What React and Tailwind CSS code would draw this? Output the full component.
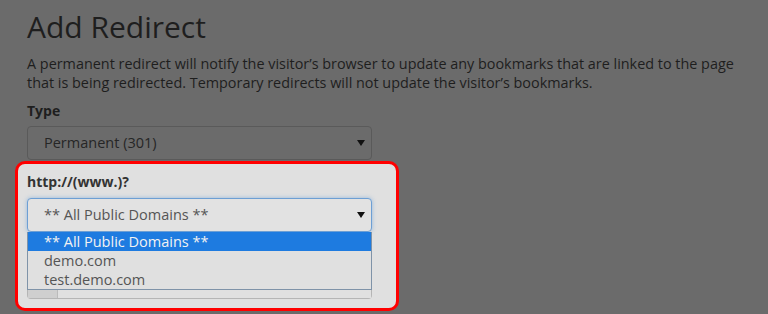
import React from "react";

function Caret() {
  return (
    <svg width="8" height="6" viewBox="0 0 8 6" className="shrink-0">
      <path d="M0 0 H8 L4 6 Z" fill="#111" />
    </svg>
  );
}

function FakeSelect({ value, dim, focus }) {
  const tone = dim
    ? "border-[#5a5a5a] bg-[#6b6b6b] text-[#262626]"
    : focus
    ? "border-[#6d9fd4] bg-[#e2e2e2] text-[#555] shadow-[0_0_4px_rgba(102,160,220,0.6)]"
    : "border-[#aaa] bg-[#e2e2e2] text-[#555]";
  return (
    <div className={`flex h-[34px] w-[345px] items-center justify-between rounded-[4px] border pl-[16px] pr-[6px] text-[14.5px] ${tone}`}>
      <span>{value}</span>
      <Caret />
    </div>
  );
}

export default function App() {
  const options = ["** All Public Domains **", "demo.com", "test.demo.com"];
  return (
    <div className="h-[314px] overflow-hidden bg-[#6b6b6b] font-['Open_Sans',sans-serif] text-[#1e1e1e]">
      <div className="pl-[27px] pt-[7px]">
        <h1 className="text-[30px] leading-[40px]">Add Redirect</h1>
        <p className="mt-[7px] w-[740px] text-[14.4px] leading-[19px]">
          A permanent redirect will notify the visitor’s browser to update any bookmarks that are linked to the page
          <br />
          that is being redirected. Temporary redirects will not update the visitor’s bookmarks.
        </p>
        <label className="mt-[9px] block text-[14px] font-bold leading-[20px]">Type</label>
        <div className="mt-[5px]">
          <FakeSelect value="Permanent (301)" dim />
        </div>

        {/* highlighted field */}
        <div className="-ml-[12px] mt-[1px] h-[150px] w-[384px] rounded-[10px] border-[3px] border-[#ff0000] bg-[#e0e0e0] pl-[9px] pt-[8px] text-[#333]">
          <label className="block text-[14px] font-bold leading-[20px]">http://(www.)?</label>
          <div className="mt-[6px]">
            <FakeSelect value="** All Public Domains **" focus />
          </div>
          <div className="w-[345px] rounded-b-[4px] border border-t-0 border-[#b5b5b5]">
            <div className="-mx-px border-x border-b border-[#7f93a8]">
              {options.map((o, i) => (
                <div
                  key={o}
                  className={`h-[19px] pl-[16px] text-[14.5px] leading-[19px] ${
                    i === 0 ? "bg-[#1e7be0] text-[#f2f2f2]" : "text-[#555]"
                  }`}
                >
                  {o}
                </div>
              ))}
            </div>
            <div className="h-[8px] bg-[#e0e0e0]">
              <div className="h-full w-[30px] border-r border-[#bbb] bg-[#cfcfcf]" />
            </div>
          </div>
        </div>
      </div>
    </div>
  );
}
